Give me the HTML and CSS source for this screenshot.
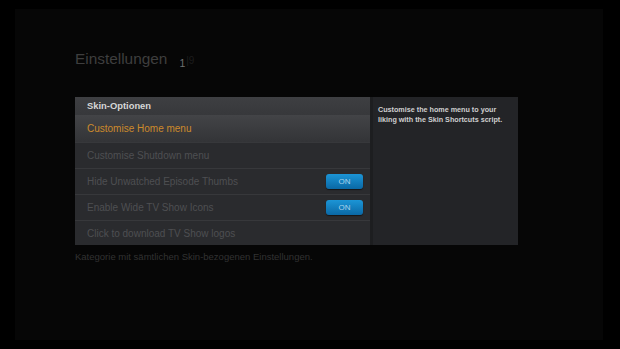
FILE: index.html
```html
<!DOCTYPE html>
<html>
<head>
<meta charset="utf-8">
<link rel="stylesheet" href="styles.css">
</head>
<body>
<div class="frame">
  <div class="title-row">
    <span class="title">Einstellungen</span>
    <span class="count">1</span><span class="total">|9</span>
  </div>
  <div class="panel">
    <div class="list">
      <div class="header">Skin-Optionen</div>
      <div class="row selected">Customise Home menu</div>
      <div class="row">Customise Shutdown menu</div>
      <div class="row">Hide Unwatched Episode Thumbs<span class="toggle">ON</span></div>
      <div class="row">Enable Wide TV Show Icons<span class="toggle">ON</span></div>
      <div class="row last">Click to download TV Show logos</div>
    </div>
    <div class="info">Customise the home menu to your liking with the Skin Shortcuts script.</div>
  </div>
  <div class="footer">Kategorie mit sämtlichen Skin-bezogenen Einstellungen.</div>
</div>
</body>
</html>
```
FILE: styles.css
```css
html, body {
  margin: 0;
  padding: 0;
  background: #000;
}
body {
  width: 620px;
  height: 349px;
  overflow: hidden;
  font-family: "Liberation Sans", Arial, sans-serif;
}
.frame {
  box-sizing: border-box;
  margin: 9px 0 0 15px;
  width: 588px;
  height: 331px;
  background: #060606;
  padding: 40px 0 0 60px;
}
.title-row {
  height: 20px;
  display: flex;
  align-items: baseline;
}
.title {
  font-size: 15.4px;
  line-height: 20px;
  color: #3e3e3e;
}
.count {
  font-size: 10.5px;
  color: #707070;
  margin-left: 12px;
  position: relative;
  top: 3px;
}
.total {
  font-size: 10px;
  color: #1c1c1c;
  margin-left: 1px;
}
.panel {
  margin-top: 28px;
  display: flex;
  width: 443px;
  height: 148px;
}
.list {
  width: 295px;
  background: #2a2b2e;
  display: flex;
  flex-direction: column;
}
.header {
  height: 18px;
  line-height: 18px;
  padding-left: 12px;
  font-size: 9.4px;
  font-weight: bold;
  color: #d6d6d6;
  background: linear-gradient(#3e3f42, #37383b);
}
.row {
  box-sizing: border-box;
  height: 26px;
  display: flex;
  align-items: center;
  justify-content: space-between;
  padding: 0 7px 0 12px;
  font-size: 10px;
  color: #4e4f52;
  border-top: 1px solid #37383b;
}
.row.selected {
  height: 27px;
  border-top: none;
  color: #cc8a2c;
  background: linear-gradient(#434447, #333437);
}
.row.last {
  height: 25px;
}
.toggle {
  width: 37px;
  height: 15px;
  box-sizing: border-box;
  border-radius: 3px;
  background: linear-gradient(#1c95d6, #0a68a5);
  box-shadow: 0 1px 1px rgba(0,0,0,0.5);
  color: #a9d3ec;
  font-size: 8px;
  line-height: 15px;
  text-align: center;
}
.info {
  width: 148px;
  box-sizing: border-box;
  background: #232427;
  border-left: 3px solid #1d1e20;
  padding: 8px 6px 0 5px;
  font-size: 7.2px;
  line-height: 9.5px;
  font-weight: bold;
  color: #cfcfcf;
}
.footer {
  margin-top: 6px;
  font-size: 9.5px;
  line-height: 12px;
  color: #323232;
}
```
